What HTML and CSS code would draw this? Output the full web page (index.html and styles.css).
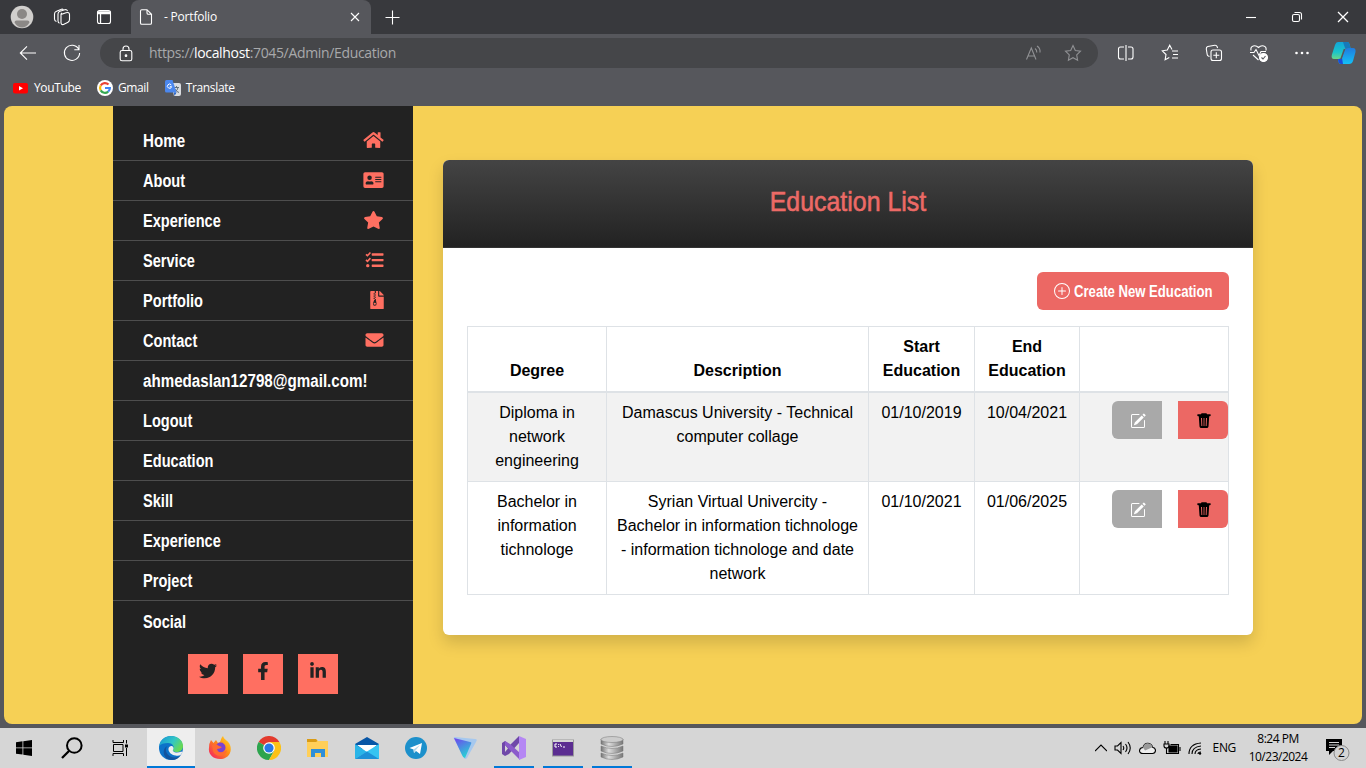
FILE: index.html
```html
<!DOCTYPE html>
<html lang="en">
<head>
<meta charset="utf-8">
<title>- Portfolio</title>
<link rel="stylesheet" href="styles.css">
</head>
<body>
<header class="tabstrip">
  <svg class="avatar" width="24" height="24" viewBox="0 0 24 24"><circle cx="12" cy="12" r="11.3" fill="#d1cfcd"/><circle cx="12" cy="9" r="5" fill="#8b8886"/><path d="M4.5 17.5q0-2 2-2h11q2 0 2 2C17.500 21 15 22.500 12 22.500S6.500 21 4.500 17.500z" fill="#8b8886"/></svg>
  <svg class="line workspaces" width="18" height="18" viewBox="0 0 18 18"><path d="M8 6.500l5-1.800q3.500-1 3.500 1.800v5q0 2-1.500 2.700L10.500 16.500Q8 17 8 14.500zM8 6.500q0-1 1-1.400M5 12.700V6q0-2 2-2.700L12.500 1.500q1.500 0 2 1.700M5 12.700q0 2 1.500 2.500M1.500 11V6q0-2 2-2.700L8.500 1.200q1.200-.3 1.800.6M1.500 11q0 2 2 2.500"/></svg>
  <svg class="line tabactions" width="16" height="16" viewBox="0 0 16 16"><rect x="1.500" y="1.500" width="13" height="13" rx="2"/><path d="M1.500 3h13M1.500 4.500h13M4.500 4v10" stroke-width="1.300"/></svg>
  <div class="tab">
    <svg class="line" width="14" height="16" viewBox="0 0 14 16"><path d="M1.500 2q0-1.300 1.300-1.300H8L12.500 5.300V14q0 1.300-1.300 1.300H2.800Q1.500 15.300 1.500 14zM8 .7V4q0 1.300 1.300 1.300h3.200"/></svg>
    <span class="ui tab-title">- Portfolio</span>
    <svg class="line close" width="10" height="10" viewBox="0 0 10 10"><path d="M1 1l8 8M9 1L1 9"/></svg>
  </div>
  <svg class="line newtab" width="15" height="15" viewBox="0 0 15 15"><path d="M7.500.5v14M.5 7.500h14"/></svg>
  <div class="window-buttons">
    <svg class="line" width="12" height="12" viewBox="0 0 12 12"><path d="M1 6.500h10"/></svg>
    <svg class="line" width="12" height="12" viewBox="0 0 12 12"><rect x="1.500" y="3.500" width="7" height="7" rx="1.500"/><path d="M3.500 1.500h5q2 0 2 2v5"/></svg>
    <svg class="line" width="12" height="12" viewBox="0 0 12 12"><path d="M1 1l10 10M11 1L1 11" stroke-width="1.300"/></svg>
  </div>
</header>
<div class="toolbar">
  <svg class="line back" width="18" height="16" viewBox="0 0 18 16"><path d="M17 8H1.500M8 1.300L1.300 8 8 14.700"/></svg>
  <svg class="line reload" width="18" height="18" viewBox="0 0 18 18"><path d="M15.700 5.200A7.600 7.600 0 1 0 16.600 9M16 1v4.700h-4.700"/></svg>
  <div class="address">
    <svg class="line" width="14" height="17" viewBox="0 0 14 17"><rect x="1.200" y="5.500" width="11.600" height="10.300" rx="1.800"/><path d="M4 5.500V4q0-3 3-3t3 3v1.500"/><circle cx="7" cy="10.700" r=".8" fill="#fff"/></svg>
    <span class="ui url">https://<b>localhost</b>:7045/Admin/Education</span>
    <svg class="line dim read" width="17" height="16" viewBox="0 0 17 16"><path d="M1.500 14.500L6.300 3l4.700 11.500M3 11h6.500M10 3.500q2 1.500 1.800 4M12 1q3.600 2.300 3 6.500"/></svg>
    <svg class="line dim" width="18" height="18" viewBox="0 0 18 18"><path d="M9 1.500l2.300 5 5.200.7-3.800 3.700.9 5.400L9 13.700l-4.600 2.600.9-5.400L1.500 7.200l5.200-.7z"/></svg>
  </div>
  <div class="tools">
    <svg class="line" width="18" height="18" viewBox="0 0 18 18"><path d="M7 3H3.500Q1.500 3 1.500 5v8q0 2 2 2H7M9 1v16M11 3h3q2 0 2 2v8q0 2-2 2h-3"/></svg>
    <svg class="line" width="18" height="18" viewBox="0 0 18 18"><path d="M11 5.500L8.700 1.300 6.300 6 1.300 6.800 5 10.500l-.9 5.200 4.200-2.100M11 7h6M12 10.500h5M11 14h6"/></svg>
    <svg class="line" width="18" height="18" viewBox="0 0 18 18"><rect x="6" y="6" width="10.500" height="10.500" rx="2"/><path d="M11.300 8.300v6M8.300 11.300h6M4.500 12.500L3.300 12q-1-.5-1.100-1.500L1.300 5q-.2-2 1.500-2.500l7-1.300q1.800-.2 2.500 1.800l.3 1"/></svg>
    <svg class="line" width="20" height="18" viewBox="0 0 20 18"><path d="M2 6.500C1 1.500 6.500.5 9.500 3.500c3-3 8.500-2 7.500 3M1 8.500h4l2-3 3 6 2-4h5M4 11l5.500 5"/><circle cx="14.500" cy="13.500" r="4" fill="#fff"/><path d="M12.500 13.500l1.500 1.500 2.500-3" stroke="#56575c"/></svg>
    <svg width="18" height="18" viewBox="0 0 18 18" fill="#fff"><circle cx="3.500" cy="9" r="1.300"/><circle cx="9" cy="9" r="1.300"/><circle cx="14.500" cy="9" r="1.300"/></svg>
  </div>
  <svg class="copilot" width="25" height="24" viewBox="0 0 25 24"><defs><linearGradient id="cg" x1="0" y1="0" x2="0" y2="1"><stop offset="0" stop-color="#12a5d8"/><stop offset=".6" stop-color="#1bc5cb"/><stop offset="1" stop-color="#68d689"/></linearGradient><linearGradient id="cb" x1="0" y1="0" x2="0" y2="1"><stop offset="0" stop-color="#217bdf"/><stop offset="1" stop-color="#13c1f6"/></linearGradient></defs><path d="M7 1h9q2 0 2.500 2L19.500 7H16q-2 0-3 2l-2 7q-1 2-3 2H3Q0 18 .8 14L4 4q.8-3 3-3z" fill="url(#cg)"/><path d="M12 1h4q2 0 2.500 2L19.500 7H14z" fill="#1779b9"/><path d="M17 7h5q3 0 2.500 4L22 20q-1 3-4 3H10q-2 0-2.500-2L7 18h1q2 0 3-2l2.500-7q1-2 3.500-2z" fill="url(#cb)"/><path d="M7 18h1q2 0 3-1l1 6h-2q-2 0-2.500-2z" fill="#1b4bd8"/><path d="M13.500 8L10 18" stroke="#56575c" stroke-width="1.500"/></svg>
</div>
<div class="bookmarks">
  <a><svg width="16" height="16" viewBox="0 0 16 16"><rect y="3" width="15" height="10.500" rx="2" fill="#f00"/><path d="M6 6l4 2.200L6 10.500z" fill="#fff"/></svg><span class="ui">YouTube</span></a>
  <a><svg width="16" height="16" viewBox="0 0 16 16"><circle cx="8" cy="8" r="8" fill="#fff"/><g fill="none" stroke-width="2.200"><path d="M11.500 4.500A4.900 4.900 0 0 0 3.700 5.600" stroke="#ea4335"/><path d="M3.700 5.600a4.900 4.900 0 0 0 0 4.800" stroke="#fbbc05"/><path d="M3.700 10.400a4.900 4.900 0 0 0 7.500 1.200" stroke="#34a853"/><path d="M11.200 11.600A4.900 4.900 0 0 0 12.900 8H8" stroke="#4285f4"/></g></svg><span class="ui">Gmail</span></a>
  <a><svg width="16" height="16" viewBox="0 0 16 16"><path d="M6 3h8q2 0 2 2v9q0 2-2 2H9z" fill="#dadce0"/><path d="M9 7.500h5M11.500 6v1.500M13 7.500q-.5 3-3 4.500M10 9q1.500 3 4 3.500" stroke="#63727f" fill="none"/><path d="M1.500 0h6l4 12.500h-10Q0 12.500 0 11V1.500Q0 0 1.500 0z" fill="#4b87ee"/><path d="M9 12.500h2.500L9.500 16z" fill="#1a5bc4"/><path d="M6.300 5A2.100 2.100 0 1 0 6.600 6.700H4.800" stroke="#fff" fill="none"/></svg><span class="ui">Translate</span></a>
</div>
<main class="page">
  <aside class="sidebar">
    <nav>
      <a><span class="news wide">Home</span><svg width="21" height="18" viewBox="0 0 576 512"><path d="M280.370 148.260L96 300.110V464a16 16 0 0 0 16 16l112.060-.290a16 16 0 0 0 15.920-16V368a16 16 0 0 1 16-16h64a16 16 0 0 1 16 16v95.640a16 16 0 0 0 16 16.050L464 480a16 16 0 0 0 16-16V300L295.670 148.260a12.190 12.190 0 0 0-15.300 0zM571.600 251.470L488 182.560V44.050a12 12 0 0 0-12-12h-56a12 12 0 0 0-12 12v72.610L318.470 43a48 48 0 0 0-61 0L4.340 251.470a12 12 0 0 0-1.600 16.900l25.500 31A12 12 0 0 0 45.150 301l235.220-193.740a12.190 12.190 0 0 1 15.300 0L530.900 301a12 12 0 0 0 16.900-1.600l25.500-31a12 12 0 0 0-1.700-16.930z"/></svg></a>
      <a><span class="news">About</span><svg width="21" height="18" viewBox="0 0 576 512"><path fill-rule="evenodd" d="M48 32h480q48 0 48 48v352q0 48-48 48H48q-48 0-48-48V80q0-48 48-48zM176 128a64 64 0 1 0 0 128 64 64 0 0 0 0-128zM64 348c0 20 10 36 22 36h180c12 0 22-16 22-36 0-34-30-60-67-60-12 0-20 8-45 8s-33-8-45-8c-37 0-67 26-67 60zM344 160q-8 0-8 8v16q0 8 8 8h160q8 0 8-8v-16q0-8-8-8zM344 224q-8 0-8 8v16q0 8 8 8h160q8 0 8-8v-16q0-8-8-8zM344 288q-8 0-8 8v16q0 8 8 8h160q8 0 8-8v-16q0-8-8-8z"/></svg></a>
      <a><span class="news">Experience</span><svg width="21" height="18" viewBox="0 0 576 512"><path d="M259.300 17.800L194 150.200 47.900 171.500c-26.200 3.800-36.700 36.100-17.700 54.600l105.700 103-25 145.500c-4.500 26.300 23.200 46 46.400 33.700L288 439.600l130.700 68.700c23.200 12.200 50.900-7.400 46.400-33.700l-25-145.500 105.700-103c19-18.500 8.500-50.800-17.700-54.600L382 150.200 316.700 17.800c-11.700-23.600-45.600-23.900-57.400 0z"/></svg></a>
      <a><span class="news">Service</span><svg width="19" height="18" viewBox="0 0 512 512"><rect x="176" y="64" width="336" height="68" rx="16"/><rect x="176" y="224" width="336" height="68" rx="16"/><rect x="176" y="384" width="336" height="68" rx="16"/><circle cx="64" cy="416" r="48"/><path d="M14 94l42 40 84-92M14 254l42 40 84-92" fill="none" stroke="#ff6f61" stroke-width="46"/></svg></a>
      <a><span class="news">Portfolio</span><svg width="14" height="18" viewBox="0 0 384 512"><path fill-rule="evenodd" d="M24 0h104v32h32V0h64v136q0 24 24 24h136v328q0 24-24 24H24q-24 0-24-24V24Q0 0 24 0zM256 0h6q10 0 17 7l98 98q7 7 7 17v6H256zM128 32v32h-32v32h32v32h-32v32h32v32h-32v32h32v32h-16L76 355q-6 62 52 62t52-62l-20-99V224h-32v-32h32v-32h-32v-32h32V96h-32V64h32V32zM128 337q34 0 34 26t-34 26-34-26 34-26z"/></svg></a>
      <a><span class="news">Contact</span><svg width="19" height="18" viewBox="0 0 512 512"><path d="M502.300 190.800c3.900-3.100 9.700-.2 9.700 4.700V400c0 26.500-21.500 48-48 48H48c-26.500 0-48-21.500-48-48V195.600c0-5 5.700-7.800 9.700-4.700 22.400 17.400 52.100 39.500 154.100 113.600 21.100 15.400 56.700 47.800 92.200 47.600 35.700.3 72-32.800 92.300-47.600 102-74.100 131.600-96.300 154-113.700zM256 320c23.200.4 56.600-29.200 73.400-41.400 132.700-96.300 142.800-104.700 173.400-128.700 5.800-4.500 9.200-11.500 9.200-18.900v-19c0-26.500-21.500-48-48-48H48c-26.500 0-48 21.500-48 48v19c0 7.400 3.400 14.300 9.200 18.900 30.600 23.900 40.700 32.400 173.400 128.700 16.800 12.200 50.200 41.800 73.400 41.400z"/></svg></a>
      <a><span class="news wide">ahmedaslan12798@gmail.com!</span></a>
      <a><span class="news">Logout</span></a>
      <a><span class="news">Education</span></a>
      <a><span class="news">Skill</span></a>
      <a><span class="news">Experience</span></a>
      <a><span class="news">Project</span></a>
      <a><span class="news">Social</span></a>
    </nav>
    <div class="social">
      <a><svg width="18" height="18" viewBox="0 0 512 512"><path d="M459.370 151.716c.325 4.548.325 9.097.325 13.645 0 138.720-105.583 298.558-298.558 298.558-59.452 0-114.680-17.219-161.137-47.106 8.447.974 16.568 1.299 25.340 1.299 49.055 0 94.213-16.568 130.274-44.832-46.132-.975-84.792-31.188-98.112-72.772 6.498.974 12.995 1.624 19.818 1.624 9.421 0 18.843-1.300 27.614-3.573-48.081-9.747-84.143-51.980-84.143-102.985v-1.299c13.969 7.797 30.214 12.670 47.431 13.319-28.264-18.843-46.781-51.005-46.781-87.391 0-19.492 5.197-37.360 14.294-52.954 51.655 63.675 129.300 105.258 216.365 109.807-1.624-7.797-2.599-15.918-2.599-24.040 0-57.828 46.782-104.934 104.934-104.934 30.213 0 57.502 12.670 76.670 33.137 23.715-4.548 46.456-13.320 66.599-25.340-7.798 24.366-24.366 44.833-46.132 57.827 21.117-2.273 41.584-8.122 60.426-16.243-14.292 20.791-32.161 39.308-52.628 54.253z"/></svg></a>
      <a><svg width="12" height="18" viewBox="0 0 320 512"><path d="M279.140 288l14.220-92.660h-88.910v-60.130c0-25.350 12.420-50.060 52.240-50.060h40.420V6.260S260.430 0 225.360 0c-73.220 0-121.080 44.380-121.080 124.720v70.620H22.890V288h81.390v224h100.170V288z"/></svg></a>
      <a><svg width="18" height="18" viewBox="0 0 448 512"><path d="M100.280 448H7.400V148.900h92.880zM53.790 108.100C24.090 108.100 0 83.500 0 53.800a53.790 53.790 0 0 1 107.580 0c0 29.700-24.100 54.300-53.790 54.300zM447.900 448h-92.680V302.400c0-34.700-.7-79.200-48.290-79.200-48.290 0-55.690 37.700-55.690 76.700V448h-92.780V148.900h89.080v40.800h1.300c12.400-23.500 42.690-48.300 87.880-48.300 94 0 111.280 61.900 111.280 142.300V448z"/></svg></a>
    </div>
  </aside>
  <section class="content">
    <article class="card">
      <header class="card-head"><h1 class="news">Education List</h1></header>
      <div class="card-body">
        <a class="create"><svg width="16" height="16" viewBox="0 0 16 16" fill="#fff"><path d="M8 15A7 7 0 1 1 8 1a7 7 0 0 1 0 14m0 1A8 8 0 1 0 8 0a8 8 0 0 0 0 16"/><path d="M8 4a.5.5 0 0 1 .5.5v3h3a.5.5 0 0 1 0 1h-3v3a.5.5 0 0 1-1 0v-3h-3a.5.5 0 0 1 0-1h3v-3A.5.5 0 0 1 8 4"/></svg><span class="news">Create New Education</span></a>
        <table>
          <colgroup><col class="c1"><col class="c2"><col class="c3"><col class="c4"><col class="c5"></colgroup>
          <thead><tr><th>Degree</th><th>Description</th><th>Start Education</th><th>End Education</th><th></th></tr></thead>
          <tbody>
            <tr><td>Diploma in network engineering</td><td>Damascus University - Technical computer collage</td><td>01/10/2019</td><td>10/04/2021</td>
              <td><div class="actions"><a class="edit"><svg width="16" height="16" viewBox="0 0 16 16"><use href="#pencil"/></svg></a><a class="delete"><svg width="16" height="16" viewBox="0 0 16 16"><use href="#trash"/></svg></a></div></td></tr>
            <tr><td>Bachelor in information tichnologe</td><td>Syrian Virtual Univercity - Bachelor in information tichnologe - information tichnologe and date network</td><td>01/10/2021</td><td>01/06/2025</td>
              <td><div class="actions"><a class="edit"><svg width="16" height="16" viewBox="0 0 16 16"><use href="#pencil"/></svg></a><a class="delete"><svg width="16" height="16" viewBox="0 0 16 16"><use href="#trash"/></svg></a></div></td></tr>
          </tbody>
        </table>
      </div>
    </article>
  </section>
</main>
<footer class="taskbar">
  <span class="app"><svg width="16" height="16" viewBox="0 0 16 16"><path d="M0 2.200L6.500 1.300v6.200H0zM7.300 1.200L16 0v7.500H7.300zM0 8.300h6.500v6.300L0 13.700zM7.300 8.300H16V16l-8.700-1.200z"/></svg></span>
  <span class="app"><svg width="22" height="22" viewBox="0 0 22 22" fill="none" stroke="#000" stroke-width="2"><circle cx="13.300" cy="8.500" r="7.300"/><path d="M8 14l-7 7" stroke-width="2.300"/></svg></span>
  <span class="app"><svg width="17" height="16" viewBox="0 0 17 16" fill="none" stroke="#000"><path d="M1 0v2.500h10.500V0M1 16v-2.500h10.500V16M1.500 4.500h9.500v7H1.500zM14.500 0v3.500M14.500 8v8"/><rect x="13" y="4.500" width="3" height="3" fill="#000" stroke="none"/></svg></span>
  <span class="app active open"><svg width="24" height="24" viewBox="0 0 24 24"><defs><linearGradient id="eg" x1="0" y1="0" x2="1" y2=".5"><stop offset="0" stop-color="#1493d5"/><stop offset=".6" stop-color="#32c6c5"/><stop offset="1" stop-color="#67d955"/></linearGradient></defs><circle cx="12" cy="12" r="12" fill="#0c72c9"/><path d="M.2 10C1 4 6 0 12 0c7 0 12 4.500 12 10 0 4-3 6-6.500 6-2.500 0-4.500-1-3.500-2.500 2-3-.5-6.500-5-6.500C5 7 1.500 8 .2 10z" fill="url(#eg)"/><path d="M8.500 10c-4 4 0 12 8 11.500 2 0 4-1 5.500-2.500-2.500 4-7.500 6-12 4.500C4 22 2.500 12.500 8.500 10z" fill="#12539e"/><path d="M9.500 12.500c.5-3 4.500-3.500 5-.5.200 1.500-1.500 2.300 0 3.500 1.500 1.300 5 1.200 8 0l1 1-2 2.500c-1 .8-3 1-5 .5-4-.5-7.500-3.500-7-7z" fill="#eee"/></svg></span>
  <span class="app"><svg width="24" height="24" viewBox="0 0 24 24"><defs><linearGradient id="fg" x1="1" y1="0" x2="0" y2="1"><stop offset="0" stop-color="#ffe226"/><stop offset=".45" stop-color="#ff8a16"/><stop offset="1" stop-color="#f3156c"/></linearGradient></defs><path d="M3 4l2.500 3L8 4l2 3 2-1c1-2 1-4 3-6 1 4 5 4 7 9 3 8-3 14-10 14S0 18 1 12q0-5 2-8z" fill="url(#fg)"/><circle cx="12.500" cy="11.500" r="5" fill="#7b42d1"/><path d="M4 9q4-2 7 1l3 1q-2 2-5 2c1 5 7 4 10 1-1 7-12 8-14 1z" fill="#ff6b31"/></svg></span>
  <span class="app"><svg width="24" height="24" viewBox="0 0 24 24"><path d="M12 12L1.600 6A12 12 0 0 1 22.400 6z" fill="#e33b2e"/><path d="M12 12L1.600 6A12 12 0 0 0 12 24l5-9z" fill="#2da44e"/><path d="M12 6h10.400A12 12 0 0 1 12 24l5.200-9z" fill="#fbc116"/><circle cx="12" cy="12" r="5.800" fill="#fff"/><circle cx="12" cy="12" r="4.600" fill="#2878e7"/></svg></span>
  <span class="app"><svg width="24" height="24" viewBox="0 0 24 24"><path d="M1 3h9l2 2h10v16H1z" fill="#ffcf59"/><path d="M1 3h9l1.500 2L10 6H1z" fill="#d99b15"/><path d="M5 13h14v8h-4v-4H9v4H5z" fill="#2f8fd8"/></svg></span>
  <span class="app"><svg width="24" height="24" viewBox="0 0 24 24"><path d="M0 8l12-7 12 7v5H0z" fill="#0756a6"/><path d="M2 9h20l-9 8z" fill="#fff"/><path d="M0 8l12 8-12 7z" fill="#29b5e8"/><path d="M24 8v15H0z" fill="#36c4f1"/><path d="M12 15.500L24 23H0z" fill="#1d91d7"/></svg></span>
  <span class="app"><svg width="22" height="22" viewBox="0 0 22 22"><circle cx="11" cy="11" r="11" fill="#1c90cb"/><path d="M4.500 11L17 6l-2 11-4-3-2 2-.5-3.500z" fill="#fff"/><path d="M8.500 12.500L15 8l-4.500 5.500L9 16z" fill="#b4d9eb"/></svg></span>
  <span class="app"><svg width="24" height="24" viewBox="0 0 24 24"><defs><linearGradient id="pg" x1="0" y1="0" x2=".5" y2="1"><stop offset="0" stop-color="#7341ef"/><stop offset="1" stop-color="#28cfd5"/></linearGradient></defs><path d="M2 1l20 2q3 0 1 3L14 22q-2 2-3 0L1 3Q0 1 2 1z" fill="#a6c8ee"/><path d="M1 2l16 4q2 0 1 2l-6 14Q10 22 9 19z" fill="url(#pg)"/></svg></span>
  <span class="app open"><svg width="24" height="24" viewBox="0 0 24 24"><path fill-rule="evenodd" d="M0 7l3-2 5 4 9-9v7L7 18l-4 2-3-2zM3 9v7l3-3.500z" fill="#6f48a9"/><path d="M3 5l5 3 10 9v7L3 9z" fill="#8b5bcb"/><path d="M17 0l7 3v18l-7 3z" fill="#b587f4"/></svg></span>
  <span class="app open"><svg width="22" height="18" viewBox="0 0 22 18"><rect x=".5" y="1" width="21" height="16" fill="#5b2d91" stroke="#999"/><path d="M1 2h20" stroke="#d5d5d5" stroke-width="2"/><path d="M5 5H3v3h2M6.500 5v.8M6.500 7.200V8M8 5l1.500 3M11 8h2" fill="none" stroke="#fff"/></svg></span>
  <span class="app open"><svg width="24" height="24" viewBox="0 0 24 24"><defs><linearGradient id="dg"><stop offset="0" stop-color="#747474"/><stop offset=".35" stop-color="#ddd"/><stop offset="1" stop-color="#777"/></linearGradient></defs><g fill="url(#dg)" stroke="#777" stroke-width=".5"><path d="M1 17q11 5 22 0v4q-11 5-22 0z"/><path d="M1 10q11 5 22 0v5q-11 5-22 0z"/><path d="M1 3q11 5 22 0v5q-11 5-22 0z"/><ellipse cx="12" cy="3.500" rx="11" ry="3" fill="#ccc"/></g></svg></span>
  <div class="tray">
    <svg width="12" height="12" viewBox="0 0 12 12"><path d="M0 9l6-6 6 6"/></svg>
    <svg width="18" height="14" viewBox="0 0 18 14"><path d="M1 5h2.500L7 1.500v11L3.500 9H1zM9 5q1.500 2 0 4M11.500 3q3 4 0 8M14 1q4.500 6 0 12"/></svg>
    <svg width="17" height="13" viewBox="0 0 17 13"><path d="M4 11.500Q.5 11.500.5 8.500q.5-3 3.500-3Q5 1 9 1.200q4 .5 4.500 4 3 .5 3 3.300-.2 3-3 3z" fill="#eee"/><path d="M4 5.500Q5 1 9 1.200q4 .5 4.500 4L6 8.500z" fill="#999" stroke="none"/></svg>
    <svg width="18" height="14" viewBox="0 0 18 14"><path d="M2 0v3M5 0v3M1 3h5v2q0 2-2.500 2T1 5zM3.500 7v5.500h12v-9H7.500M17 6v4"/><rect x="6" y="5" width="8" height="6" fill="#000"/></svg>
    <svg width="15" height="14" viewBox="0 0 15 14"><path d="M1 13Q1 3 13 2M4 13q0-7 9-8M7 13q0-4.500 6-5M10 13q0-2 3-2"/><circle cx="12" cy="12.500" r="1.200" fill="#000" stroke="none"/></svg>
  </div>
  <span class="ui lang">ENG</span>
  <div class="clock"><span class="ui">8:24 PM</span><span class="ui">10/23/2024</span></div>
  <svg class="notify" width="26" height="26" viewBox="0 0 26 26"><path d="M1 4h16v12H8l-4 4v-4H1z"/><path d="M4 7.500h10M4 10h10M4 12.500h6" stroke="#d7d7d7"/><circle cx="16.500" cy="18" r="7.500" fill="#d4d4d4" stroke="#888"/><text class="count" x="16.500" y="22.300" text-anchor="middle">2</text></svg>
</footer>
<svg class="defs" width="0" height="0">
  <symbol id="pencil" viewBox="0 0 16 16"><path fill="#fff" d="M15.502 1.940a.5.5 0 0 1 0 .706L14.459 3.690l-2-2L13.502.646a.5.5 0 0 1 .707 0l1.293 1.293zm-1.750 2.456-2-2L4.939 9.210a.5.5 0 0 0-.121.196l-.805 2.414a.25.25 0 0 0 .316.316l2.414-.805a.5.5 0 0 0 .196-.120l6.813-6.814z"/><path fill="#fff" fill-rule="evenodd" d="M1 13.500A1.500 1.500 0 0 0 2.500 15h11a1.500 1.500 0 0 0 1.500-1.500v-6a.5.5 0 0 0-1 0v6a.5.5 0 0 1-.5.5h-11a.5.5 0 0 1-.5-.5v-11a.5.5 0 0 1 .5-.5H9a.5.5 0 0 0 0-1H2.500A1.500 1.500 0 0 0 1 2.500z"/></symbol>
  <symbol id="trash" viewBox="0 0 16 16"><path fill-rule="evenodd" d="M6 .3h4q1 0 1 .9h3q.8 0 .8.9t-.8 1.200h-.8L12.500 13.500q-.2 1.500-1.700 1.500H5.200q-1.500 0-1.700-1.500L2.800 3.300H2q-.8-.3-.8-1.200t.8-.9h3Q5 .3 6 .3zM5 5l.4 8h.9L6 5zM7.600 5v8h.8V5zM10 5l-.3 8h.9L11 5z"/></symbol>
</svg>
</body>
</html>
```
FILE: styles.css
```css
* { box-sizing: border-box; }
body { margin: 0; width: 1366px; height: 768px; overflow: hidden; display: flex; flex-direction: column; background: #56575c; font-family: "Liberation Sans", Arial, sans-serif; color: #000; }
svg { display: block; flex: none; }
.defs { position: absolute; }
.line { fill: none; stroke: #fff; stroke-width: 1.1; }
.line.dim { stroke: #909194; }
.ui { font-family: "Open Sans", sans-serif; font-size: 12px; line-height: 16px; padding-bottom: 1px; white-space: nowrap; letter-spacing: -.35px; }
.news { display: inline-block; font-weight: 700; white-space: nowrap; transform: scaleX(.81); transform-origin: left center; }
.news.wide { transform: scaleX(.842); }

.tabstrip { height: 34px; flex: none; display: flex; align-items: center; background: #38393d; padding-left: 10px; }
.workspaces { margin-left: 19px; }
.tabactions { margin-left: 25px; }
.tab { width: 240px; height: 34px; margin-left: 19px; padding: 0 11px 0 8px; display: flex; align-items: center; background: #56575c; border-radius: 8px 8px 0 0; color: #fff; }
.tab-title { margin-left: 11px; letter-spacing: -.2px; }
.close { margin-left: auto; }
.newtab { margin-left: 14px; }
.window-buttons { margin-left: auto; margin-right: 17px; display: flex; gap: 34px; }

.toolbar { height: 38px; flex: none; display: flex; align-items: center; padding-left: 19px; }
.reload { margin-left: 26px; }
.address { width: 998px; height: 30px; margin-left: 19px; padding: 0 16px 0 19px; border-radius: 15px; background: #454649; display: flex; align-items: center; }
.url { margin-left: 16px; font-size: 14px; color: #a8a9ab; letter-spacing: -.34px; }
.url b { color: #fff; font-weight: 400; }
.read { margin-left: auto; margin-right: 22px; }
.tools { display: flex; gap: 26px; margin-left: 19px; }
.tools svg:last-child { margin-left: -2px; }
.copilot { margin-left: 20px; }

.bookmarks { height: 34px; flex: none; display: flex; align-items: center; padding: 0 0 2px 13px; gap: 16px; color: #fff; }
.bookmarks a { display: flex; align-items: center; gap: 5px; }

.page { height: 618px; flex: none; margin: 0 4px; border-radius: 8px; overflow: hidden; display: flex; background: #f6d055; }
.sidebar { width: 300px; margin-left: 109px; padding-top: 15px; background: #222; }
nav a { height: 40px; padding: 0 29.500px 1px 29.500px; display: flex; align-items: center; justify-content: space-between; border-bottom: 1px solid #4e4e4e; color: #fff; font-size: 18px; }
nav a:last-child { border-bottom: 0; }
nav .news { padding-top: 3px; }
nav svg { fill: #ff6f61; }
.social { display: flex; justify-content: center; gap: 15px; margin-top: 13px; }
.social a { width: 40px; height: 40px; padding-top: 8px; display: flex; justify-content: center; background: #ff6f61; }
.social svg { fill: #222; }

.content { padding: 54px 0 0 30px; }
.card { width: 810px; height: 475px; border-radius: 6px; background: #fff; box-shadow: 0 8px 16px rgba(0,0,0,.15); overflow: hidden; }
.card-head { height: 88px; display: flex; justify-content: center; align-items: center; background: linear-gradient(#444, #222); border-bottom: 1px solid #333; padding-bottom: 4px; }
.card-head h1 { margin: 0; font-size: 28px; font-weight: 400; -webkit-text-stroke: .6px #ec6a66; color: #ec6a66; transform: scaleX(.89); transform-origin: center; }
.card-body { padding: 24px; display: flex; flex-direction: column; align-items: flex-end; }
.create { width: 192px; height: 38px; padding-left: 17px; display: flex; align-items: center; gap: 4px; border-radius: 6px; background: #ec6864; color: #fff; font-size: 16px; }
.create .news { width: 138px; padding-top: 2px; transform: scaleX(.82); }
table { width: 761px; margin-top: 16px; table-layout: fixed; border-collapse: collapse; font-size: 16px; line-height: 24px; text-align: center; }
.c1 { width: 139px; }
.c2 { width: 262px; }
.c3 { width: 106px; }
.c4 { width: 105px; }
.c5 { width: 149px; }
th, td { padding: 8px; border: 1px solid #dee2e6; vertical-align: top; }
th { vertical-align: bottom; border-bottom-width: 2px; }
tbody tr:first-child { background: #f2f2f2; }
.actions { display: flex; justify-content: flex-end; gap: 16px; margin-right: -8px; }
.actions a { width: 50px; height: 38px; padding: 1px 0 0 1px; display: flex; align-items: center; justify-content: center; }
.edit { background: #a9a9a9; border-radius: 6px 0 0 6px; }
.delete { background: #ec6864; border-radius: 0 6px 6px 0; }

.taskbar { height: 40px; margin-top: 4px; flex: none; display: flex; align-items: center; background: #d6d6d6; }
.app { width: 40px; height: 40px; margin: 0 4.500px; display: flex; align-items: center; justify-content: center; }
.app:nth-child(1), .app:nth-child(2), .app:nth-child(3) { width: 48px; margin: 0; }
.app.open { border-bottom: 2px solid #0078d7; padding-top: 2px; }
.app.active { width: 48px; margin: 0 0 0 3px; background: #eee; }
.tray { display: flex; align-items: center; gap: 7px; margin-left: auto; }
.tray svg { fill: none; stroke: #000; stroke-width: 1.100; }
.lang { margin-left: 10px; }
.clock { width: 70px; margin-left: 7px; display: flex; flex-direction: column; align-items: center; }
.clock .ui { line-height: 18px; padding: 0; letter-spacing: -.5px; }
.notify { margin: 0 15px 0 12px; }
.count { font: 12px "Open Sans", sans-serif; }
```
